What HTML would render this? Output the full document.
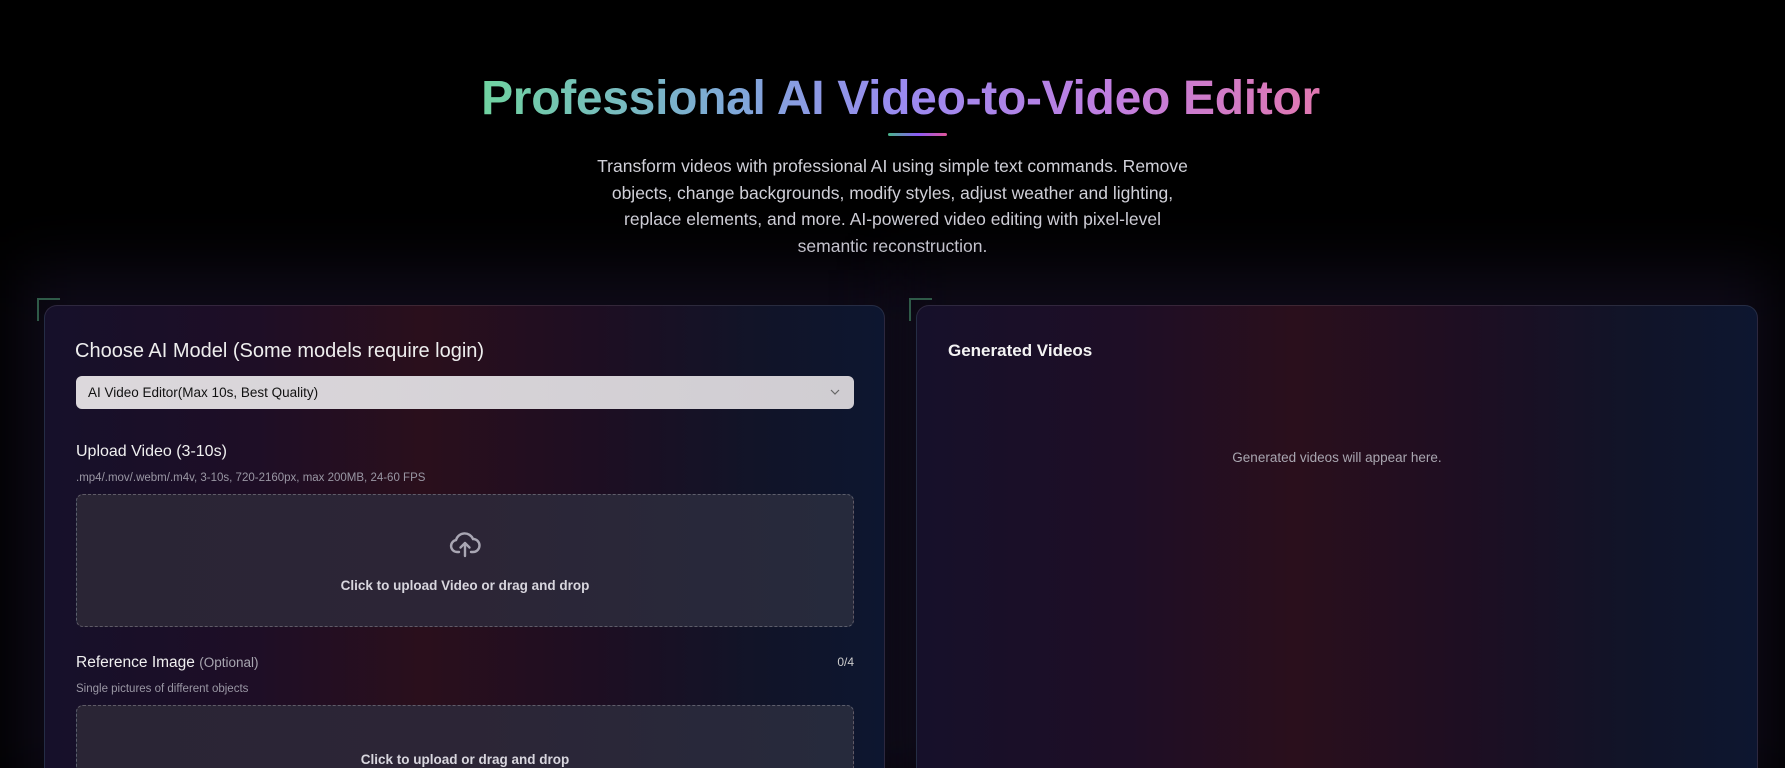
<!DOCTYPE html>
<html><head><meta charset="utf-8"><style>
*{box-sizing:border-box;margin:0;padding:0}
html,body{width:1785px;height:768px;overflow:hidden}
body{background:#000;font-family:"Liberation Sans",sans-serif;position:relative;color:#fff}
h1{position:absolute;top:69px;left:8px;width:1785px;text-align:center;font-size:48px;font-weight:bold;letter-spacing:-0.3px;line-height:60px}
h1 span{background:linear-gradient(90deg,#6fd3a0 0%,#7fa8d8 30%,#9a8af0 50%,#c07ee0 75%,#e077b0 100%);-webkit-background-clip:text;background-clip:text;color:transparent}
.ul{position:absolute;left:888px;top:133px;width:59px;height:3px;border-radius:2px;background:linear-gradient(90deg,#48b58a,#8b5cf6,#e0559a)}
.sub{position:absolute;left:587px;top:153px;width:611px;text-align:center;font-size:17.5px;line-height:26.7px;color:#d0d0d8}
.glow{position:absolute;top:270px;height:520px;filter:blur(30px);background:rgba(40,30,70,.35)}
.panel{position:absolute;top:305px;height:500px;border:1px solid rgba(255,255,255,.1);border-radius:13px;
background:linear-gradient(90deg,#16102a 0%,#1e0e26 25%,#2a0f1c 45%,#1e0e22 65%,#111428 85%,#0d1630 100%)}
.corner{position:absolute;width:23px;height:23px;border-left:2px solid #2f5a48;border-top:2px solid #2f5a48}
.t{position:absolute;white-space:nowrap}
.sel{position:absolute;left:76px;top:376px;width:778px;height:33px;border-radius:6px;background:linear-gradient(90deg,#dcd8dc,#d0cdd2);color:#111;font-size:13.5px;line-height:33px;padding-left:12px}
.drop{position:absolute;left:76px;width:778px;border:1px dashed rgba(255,255,255,.25);border-radius:7px;background:linear-gradient(90deg,#2a2535,#2c2536 50%,#262a3c)}
</style></head><body>
<h1><span>Professional AI Video-to-Video Editor</span></h1>
<div class="ul"></div>
<div class="sub">Transform videos with professional AI using simple text commands. Remove objects, change backgrounds, modify styles, adjust weather and lighting, replace elements, and more. AI-powered video editing with pixel-level semantic reconstruction.</div>

<div class="glow" style="left:20px;width:880px"></div>
<div class="glow" style="left:895px;width:880px"></div>

<div class="panel" style="left:44px;width:841px"></div>
<div class="corner" style="left:37px;top:298px"></div>
<div class="panel" style="left:916px;width:842px"></div>
<div class="corner" style="left:909px;top:298px"></div>

<div class="t" style="left:75px;top:340px;font-size:20px;color:#eee">Choose AI Model (Some models require login)</div>
<div class="sel">AI Video Editor(Max 10s, Best Quality)
<svg style="position:absolute;right:14px;top:13px" width="10" height="7" viewBox="0 0 10 7"><path d="M1 1l4 4 4-4" fill="none" stroke="#666" stroke-width="1.2"/></svg></div>

<div class="t" style="left:76px;top:443px;font-size:16px;color:#f0f0f0">Upload Video (3-10s)</div>
<div class="t" style="left:76px;top:472px;font-size:11.5px;color:#9a97a4">.mp4/.mov/.webm/.m4v, 3-10s, 720-2160px, max 200MB, 24-60 FPS</div>
<div class="drop" style="top:494px;height:133px"></div>
<svg style="position:absolute;left:449px;top:531px" width="32" height="27" viewBox="0 0 32 27"><path d="M10 21H8a6 6 0 0 1-1-11.9A9 9 0 0 1 24 8a6.5 6.5 0 0 1 0 13h-2" fill="none" stroke="#a9a6b3" stroke-width="2.4" stroke-linecap="round"/><path d="M16 25V12M11.5 16.5L16 12l4.5 4.5" fill="none" stroke="#a9a6b3" stroke-width="2.4" stroke-linecap="round" stroke-linejoin="round"/></svg>
<div class="t" style="left:76px;width:778px;text-align:center;top:578px;font-size:13.5px;font-weight:bold;color:#d8d6de">Click to upload Video or drag and drop</div>

<div class="t" style="left:76px;top:654px;font-size:15.5px;color:#f0f0f0">Reference Image <span style="font-size:13.5px;color:#a8a6b0">(Optional)</span></div>
<div class="t" style="left:754px;width:100px;text-align:right;top:655px;font-size:12px;color:#ccc">0/4</div>
<div class="t" style="left:76px;top:683px;font-size:11.5px;color:#9a97a4">Single pictures of different objects</div>
<div class="drop" style="top:705px;height:90px"></div>
<div class="t" style="left:76px;width:778px;text-align:center;top:752px;font-size:13.5px;font-weight:bold;color:#d8d6de">Click to upload or drag and drop</div>

<div class="t" style="left:948px;top:341px;font-size:17px;font-weight:bold;color:#f4f4f4">Generated Videos</div>
<div class="t" style="left:916px;width:842px;text-align:center;top:450px;font-size:13.5px;color:#a9a6b0">Generated videos will appear here.</div>
</body></html>
